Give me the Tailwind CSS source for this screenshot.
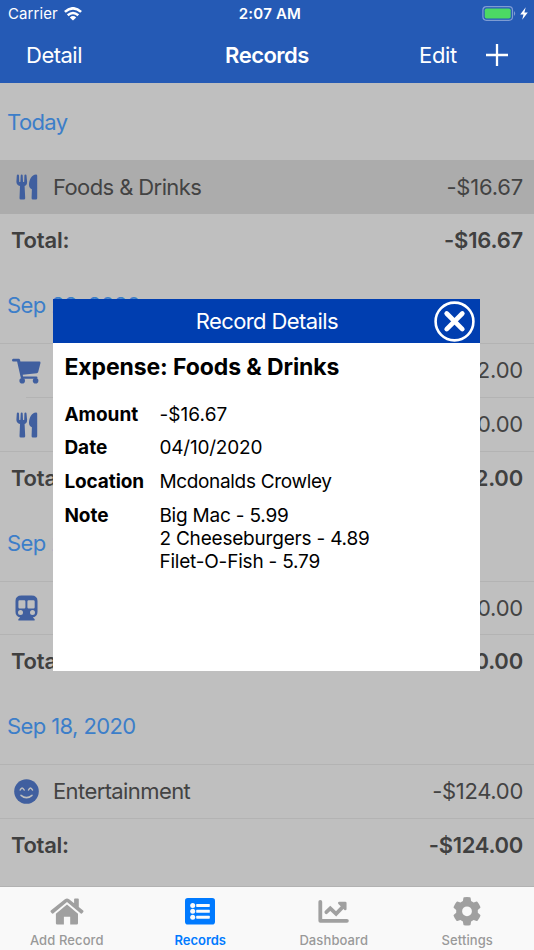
<!DOCTYPE html>
<html lang="en">
<head>
    <meta charset="UTF-8">
    <meta name="viewport" content="width=device-width, initial-scale=1.0">
    <title>Records</title>
    <script src="https://cdn.jsdelivr.net/npm/@tailwindcss/browser@4"></script>
</head>
<body class="bg-[#bfbfbf] font-['Inter','Liberation_Sans',sans-serif]">
    <!-- shared icons -->
    <svg class="hidden">
        <symbol id="food" viewBox="0 0 22 26">
            <path d="M.8 1.5Q.9.4 1.9.4T3 1.5l.2 6.2q.6.6 1.2 0L4.7 1.4Q4.8.4 5.7.4t1 1L7 7.7q.6.6 1.2 0l.2-6.2Q8.500.4 9.500.4t1 1.100l.6 6.200c.1 2.600-1.100 3.700-2.500 4.400l.6 12.200q0 1.300-1.300 1.300H4.800q-1.300 0-1.300-1.300l.5-12.200C1.800 11.200.3 10.100.4 7.700z"/>
            <path d="M20 .4q1.200 0 1.200 1.200v22.700q0 1.300-1.300 1.300h-3q-1.300 0-1.300-1.300l.3-9q-3-1.400-2.900-4.500C13.200 5.200 15.600.9 20 .4z"/>
        </symbol>
    </svg>

    <div class="w-[534px] h-[950px] flex flex-col overflow-hidden relative">
        <!-- status bar + nav bar -->
        <header class="h-[83px] shrink-0 bg-[#255ab5] text-white">
            <div class="h-[27px] grid grid-cols-3 items-center text-[15px] pl-2 pr-[6px]">
                <div class="flex items-center gap-[6px] pt-px">
                    <span class="tracking-[0.1px]">Carrier</span>
                    <svg class="w-[18px] h-[14px]" viewBox="0 0 18 14" fill="none" stroke="currentColor" stroke-width="2.600">
                        <path d="M.9 4.900Q9-2.300 17.100 4.900M3.700 8.300Q9 3.700 14.300 8.300"/>
                        <path d="M5.800 10.400Q9 7.600 12.200 10.400L9 13.500z" fill="currentColor" stroke="none"/>
                    </svg>
                </div>
                <span class="text-center font-semibold tracking-[0.2px] whitespace-nowrap pt-px pl-[4px]">2:07 AM</span>
                <div class="flex items-center justify-end gap-[3px]">
                    <svg class="w-[35px] h-[15px]" viewBox="0 0 35 15">
                        <rect x=".9" y=".7" width="29.600" height="13.600" rx="3.500" fill="none" stroke="#7e9cd3" stroke-width="1.200"/>
                        <rect x="2.700" y="2.500" width="26" height="10" rx="1.800" fill="#4cd964"/>
                        <path d="M32 5q2.400 2.500 0 5z" fill="#7e9cd3"/>
                    </svg>
                    <svg class="w-[8px] h-[13px]" viewBox="0 0 8 13" fill="currentColor"><path d="M5.700.3.2 7.500h3.300L2.200 12.700 7.800 5.400H4.400z"/></svg>
                </div>
            </div>
            <div class="h-[56px] grid grid-cols-3 items-center text-[22px] pl-[26px] pr-[26px]">
                <span class="tracking-[-0.5px]">Detail</span>
                <span class="text-center font-semibold tracking-[-0.5px]">Records</span>
                <div class="flex items-center justify-end gap-[29px]">
                    <span class="tracking-[-0.3px]">Edit</span>
                    <svg class="w-[22px] h-[22px]" viewBox="0 0 22 22" stroke="currentColor" stroke-width="2.300"><path d="M11 0v22M0 11h22"/></svg>
                </div>
            </div>
        </header>

        <!-- record list -->
        <main class="grow overflow-hidden text-[22px] text-[#434343] tracking-[-0.6px]">
            <h2 class="h-[77px] flex items-center pl-[7px] pt-px text-[#3c7ec9]">Today</h2>
            <div class="h-[54px] flex items-center bg-[#acacac] pl-4 pr-[11px]">
                <svg class="w-[22px] h-[26px] mr-[15px] fill-[#405f9f]"><use href="#food"/></svg>
                <span>Foods &amp; Drinks</span>
                <span class="ml-auto tracking-[-0.2px]">-$16.67</span>
            </div>
            <div class="h-[53px] mb-px flex items-center justify-between pl-[11px] pr-[11px] font-semibold tracking-[-0.2px] text-[#404040]"><span>Total:</span><span>-$16.67</span></div>

            <h2 class="h-[75px] flex items-center pl-[7px] text-[#3c7ec9]">Sep 28, 2020</h2>
            <div class="h-[54px] flex items-center border-t border-[#b3b3b3] pl-3 pr-[11px]">
                <svg class="w-[29px] h-[26px] mr-[12px] fill-[#405f9f]" viewBox="0 0 29 26">
                    <path d="M1.200.8h5.500q1 0 1.300 1l.4 1.800h18.900q1.400 0 1.200 1.300L26.200 14q-.3 1.100-1.400 1.200L10.700 16.800l.4 1.800h13.200q1.200 0 1.200 1.100t-1.200 1.100H10.100q-1.100 0-1.300-1L5.100 3.500H1.300Q0 3.500 0 2.200T1.200.8z"/>
                    <circle cx="10.200" cy="22.800" r="2.800"/><circle cx="23.600" cy="22.800" r="2.800"/>
                </svg>
                <span>Shopping</span>
                <span class="ml-auto tracking-[-0.2px]">-$42.00</span>
            </div>
            <div class="h-[54px] ml-[26px] flex items-center border-t border-[#b3b3b3] pr-[11px]">
                <svg class="w-[22px] h-[26px] -ml-[10px] mr-[15px] fill-[#405f9f]"><use href="#food"/></svg>
                <span>Foods &amp; Drinks</span>
                <span class="ml-auto tracking-[-0.2px]">-$20.00</span>
            </div>
            <div class="h-[54px] flex items-center justify-between border-t border-[#b3b3b3] pl-[11px] pr-[11px] font-semibold tracking-[-0.2px] text-[#404040]"><span>Total:</span><span>-$62.00</span></div>

            <h2 class="h-[76px] flex items-center pl-[7px] text-[#3c7ec9]">Sep 20, 2020</h2>
            <div class="h-[53px] flex items-center border-t border-[#b3b3b3] pl-[15px] pr-[11px]">
                <svg class="w-[23px] h-[26px] mr-[15px] fill-[#405f9f]" viewBox="0 0 23 26">
                    <path fill-rule="evenodd" d="M6.500.5h10Q22.500.5 22.500 6v11q0 4.500-4.700 5.400l1.700 1.700q1 1.500-.5 1.500H4q-1.500 0-.5-1.500l1.700-1.700Q.5 21.500.5 17V6Q.5.500 6.500.500zM4.600 5.200q-1.200 0-1.200 1.200v5.800q0 1.200 1.200 1.200h4.600q1.200 0 1.200-1.200V6.400q0-1.200-1.200-1.200zm9 0q-1.200 0-1.200 1.200v5.800q0 1.200 1.200 1.200h4.900q1.200 0 1.200-1.200V6.400q0-1.200-1.200-1.200zM5.500 15a2.500 2.500 0 100 5 2.500 2.500 0 000-5zm12 0a2.500 2.500 0 100 5 2.500 2.500 0 000-5z"/>
                </svg>
                <span>Transport</span>
                <span class="ml-auto tracking-[-0.2px]">-$20.00</span>
            </div>
            <div class="h-[54px] flex items-center justify-between border-t border-[#b3b3b3] pl-[11px] pr-[11px] font-semibold tracking-[-0.2px] text-[#404040]"><span>Total:</span><span>-$20.00</span></div>

            <h2 class="h-[76px] flex items-center pl-[7px] text-[#3c7ec9]">Sep 18, 2020</h2>
            <div class="h-[54px] flex items-center border-t border-[#b3b3b3] pl-[14px] pr-[11px]">
                <svg class="w-[25px] h-[25px] mr-[14px]" viewBox="0 0 25 25">
                    <circle cx="12.500" cy="12.500" r="12.300" fill="#405f9f"/>
                    <path d="M6.200 11q1.800-4.200 4 0M14.500 11q1.900-4.200 4 0M7 16.300q5.500 4.600 11 0" fill="none" stroke="#bfbfbf" stroke-width="1.500" stroke-linecap="round"/>
                </svg>
                <span>Entertainment</span>
                <span class="ml-auto tracking-[-0.3px]">-$124.00</span>
            </div>
            <div class="h-[53px] flex items-center justify-between border-t border-[#b3b3b3] pl-[11px] pr-[11px] font-semibold tracking-[-0.3px] text-[#404040]"><span>Total:</span><span>-$124.00</span></div>
        </main>

        <!-- tab bar -->
        <nav class="h-[64px] shrink-0 grid grid-cols-4 bg-[#f9f9f9] border-t border-[#b2b2b2] text-[13px] font-medium text-[#999] tracking-[0.1px]">
            <div class="flex flex-col items-center pt-[8px]">
                <svg class="w-[34px] h-[32px]" viewBox="0 0 34 32" fill="#a0a0a0">
                    <path d="M17 9.500 28 18.700v9.500q0 1.300-1.300 1.300h-6.500v-7.700h-6.300v7.700H7.200q-1.300 0-1.300-1.300v-9.500z"/>
                    <path d="M14.900 4.200q2.100-1.600 4.200 0l5 4V4.300q0-.9.9-.9h2.900q.9 0 .9.900v7.700l4.400 3.600q.7.700.1 1.400l-1.100 1.300q-.7.700-1.400.100L17 6.900 3.200 18.400q-.7.600-1.400-.1L.7 17q-.6-.7.100-1.400z"/>
                </svg>
                <span class="mt-[4px] leading-[19px]">Add Record</span>
            </div>
            <div class="flex flex-col items-center pt-[8px] text-[#007aff] font-semibold">
                <svg class="w-[30px] h-[32px]" viewBox="0 0 30 32">
                    <rect y="3" width="30" height="26.500" rx="2.800" fill="#007aff"/>
                    <g fill="#f9f9f9">
                        <circle cx="7.700" cy="10.400" r="2.500"/><circle cx="7.700" cy="16.300" r="2.500"/><circle cx="7.700" cy="22.200" r="2.500"/>
                        <rect x="11.200" y="8.900" width="13.600" height="3" rx=".6"/><rect x="11.200" y="14.800" width="13.600" height="3" rx=".6"/><rect x="11.200" y="20.700" width="13.600" height="3" rx=".6"/>
                    </g>
                </svg>
                <span class="mt-[4px] leading-[19px] tracking-[-0.05px]">Records</span>
            </div>
            <div class="flex flex-col items-center pt-[8px]">
                <svg class="w-[31px] h-[32px]" viewBox="0 0 31 32" fill="none" stroke="#a0a0a0" stroke-linecap="round" stroke-linejoin="round">
                    <path d="M2.300 6.800v19h26.600" stroke-width="3.800"/>
                    <path d="M8.300 17.200l4-3.800 5.800 5.400 6-6.200" stroke-width="3.700" stroke-linejoin="miter"/>
                    <path d="M21.300 8h6v6z" fill="#a0a0a0" stroke-width="2.500"/>
                </svg>
                <span class="mt-[4px] leading-[19px]">Dashboard</span>
            </div>
            <div class="flex flex-col items-center pt-[8px]">
                <svg class="w-[30px] h-[32px]" viewBox="0 0 30 32">
                    <path fill="#a0a0a0" fill-rule="evenodd" d="M12 2.300q3-.8 6 0 .5.200.6.800l.5 3 2.500 1.500 3-1q.5-.2.9.300 2 2.300 2.900 5 .2.600-.3 1l-2.300 2v2.800l2.300 2q.5.400.3 1-.9 2.700-2.900 5-.4.500-.9.300l-3-1-2.500 1.500-.5 3q-.1.600-.6.700-3 .7-6 0-.5-.1-.6-.7l-.5-3-2.500-1.500-3 1q-.5.200-.9-.3-2-2.300-2.900-5-.2-.6.300-1l2.300-2v-2.800l-2.300-2q-.5-.4-.3-1 .9-2.700 2.900-5 .4-.5.900-.3l3 1 2.500-1.500.5-3q.1-.6.600-.8zM15 11.400a4.900 4.900 0 100 9.800 4.900 4.900 0 000-9.800z"/>
                </svg>
                <span class="mt-[4px] leading-[19px]">Settings</span>
            </div>
        </nav>

        <!-- record details popup -->
        <section class="absolute left-[53.400px] top-[299px] w-[427px] h-[371.500px] bg-white text-black text-[19px]">
            <div class="h-[44px] relative flex items-center justify-center bg-[#003eb0] text-white text-[22px] tracking-[-0.6px]">
                Record Details
                <svg class="absolute right-[5px] top-[2px] w-[41px] h-[41px]" viewBox="0 0 41 41" fill="none" stroke="currentColor">
                    <circle cx="20.500" cy="20.500" r="18.900" stroke-width="2.600"/>
                    <path d="M12.700 12.500 28.300 28.100M28.300 12.500 12.700 28.100" stroke-width="4.700" stroke-linecap="round"/>
                </svg>
            </div>
            <div class="pl-[11px]">
                <h3 class="pt-[10px] leading-[29px] text-[23px] font-bold tracking-[-0.1px]">Expense: Foods &amp; Drinks</h3>
                <dl class="mt-[20.500px] grid grid-cols-[95px_1fr] gap-y-[10.400px] leading-[23.300px] tracking-[-0.2px]">
                    <dt class="font-bold tracking-normal">Amount</dt><dd class="tracking-[0.1px]">-$16.67</dd>
                    <dt class="font-bold tracking-normal">Date</dt><dd>04/10/2020</dd>
                    <dt class="font-bold tracking-[-0.1px]">Location</dt><dd class="tracking-[-0.33px]">Mcdonalds Crowley</dd>
                    <dt class="font-bold tracking-normal">Note</dt><dd>Big Mac - 5.99<br>2 Cheeseburgers - 4.89<br>Filet-O-Fish - 5.79</dd>
                </dl>
            </div>
        </section>
    </div>
</body>
</html>
